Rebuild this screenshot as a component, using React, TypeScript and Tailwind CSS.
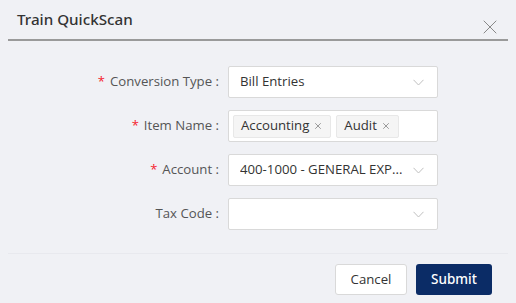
import { X } from "lucide-react";

const font = { fontFamily: '"Open Sans", "Noto Sans", sans-serif' };
const heavy = { fontFamily: '"Noto Sans", "Open Sans", sans-serif' };

function Chevron() {
  return (
    <svg width="11" height="7" viewBox="0 0 11 7" className="shrink-0">
      <path d="M0.5 0.8 L5.5 6 L10.5 0.8" fill="none" stroke="#bfbfbf" strokeWidth="1" />
    </svg>
  );
}

function Label({ text, required }: { text: string; required?: boolean }) {
  return (
    <div className="w-[219px] flex justify-end items-center text-[13.2px] text-[#555]">
      {required && <span className="text-[#f5222d] mr-[5px] text-[13px]">*</span>}
      <span>{text} :</span>
    </div>
  );
}

function Tag({ text }: { text: string }) {
  return (
    <span className="flex items-center h-[23px] px-[7px] bg-[#f5f5f5] border border-[#e8e8e8] rounded-[2px] text-[13.2px] text-[#333]">
      {text}
      <X size={10} className="ml-[4px] text-[#888]" strokeWidth={2} />
    </span>
  );
}

export default function App() {
  return (
    <div className="w-[516px] h-[303px] bg-[#f0f1f5] overflow-hidden" style={font}>
      <div className="flex items-start justify-between pl-[17px] pr-[14px] pt-[8px] h-[39px]">
        <span className="text-[15.2px] font-medium text-[#333]" style={heavy}>
          Train QuickScan
        </span>
        <X size={24} strokeWidth={1} className="text-[#888] mt-[7px]" />
      </div>
      <div className="mx-[8px] h-[2px] bg-[#9a9a9a]" />

      <div className="flex flex-col gap-[12px] pt-[25px]">
        <div className="flex items-center h-[32px]">
          <Label text="Conversion Type" required />
          <div className="ml-[9px] w-[210px] h-[32px] bg-white border border-[#d9d9d9] rounded-[2px] flex items-center justify-between pl-[11px] pr-[13px] text-[13.2px] text-[#333]">
            <span>Bill Entries</span>
            <Chevron />
          </div>
        </div>
        <div className="flex items-center h-[32px]">
          <Label text="Item Name" required />
          <div className="ml-[9px] w-[210px] h-[32px] bg-white border border-[#d9d9d9] rounded-[2px] flex items-center gap-[5px] pl-[4px]">
            <Tag text="Accounting" />
            <Tag text="Audit" />
          </div>
        </div>
        <div className="flex items-center h-[32px]">
          <Label text="Account" required />
          <div className="ml-[9px] w-[210px] h-[32px] bg-white border border-[#d9d9d9] rounded-[2px] flex items-center justify-between gap-[6px] pl-[11px] pr-[13px] text-[13.2px] text-[#333]">
            <span className="whitespace-nowrap overflow-hidden">400-1000 - GENERAL EXP...</span>
            <Chevron />
          </div>
        </div>
        <div className="flex items-center h-[32px]">
          <Label text="Tax Code" />
          <div className="ml-[9px] w-[210px] h-[32px] bg-white border border-[#d9d9d9] rounded-[2px] flex items-center justify-end pr-[13px]">
            <Chevron />
          </div>
        </div>
      </div>

      <div className="mx-[8px] mt-[23px] h-px bg-[#e8e9ee]" />
      <div className="flex justify-end gap-[9px] pr-[24px] pt-[10px]">
        <button className="w-[72px] h-[31px] bg-white border border-[#d9d9d9] rounded-[3px] text-[13.2px] text-[#333]">
          Cancel
        </button>
        <button
          className="w-[76px] h-[31px] bg-[#0b2c66] rounded-[3px] text-[13.5px] font-medium text-white"
          style={heavy}
        >
          Submit
        </button>
      </div>
    </div>
  );
}
